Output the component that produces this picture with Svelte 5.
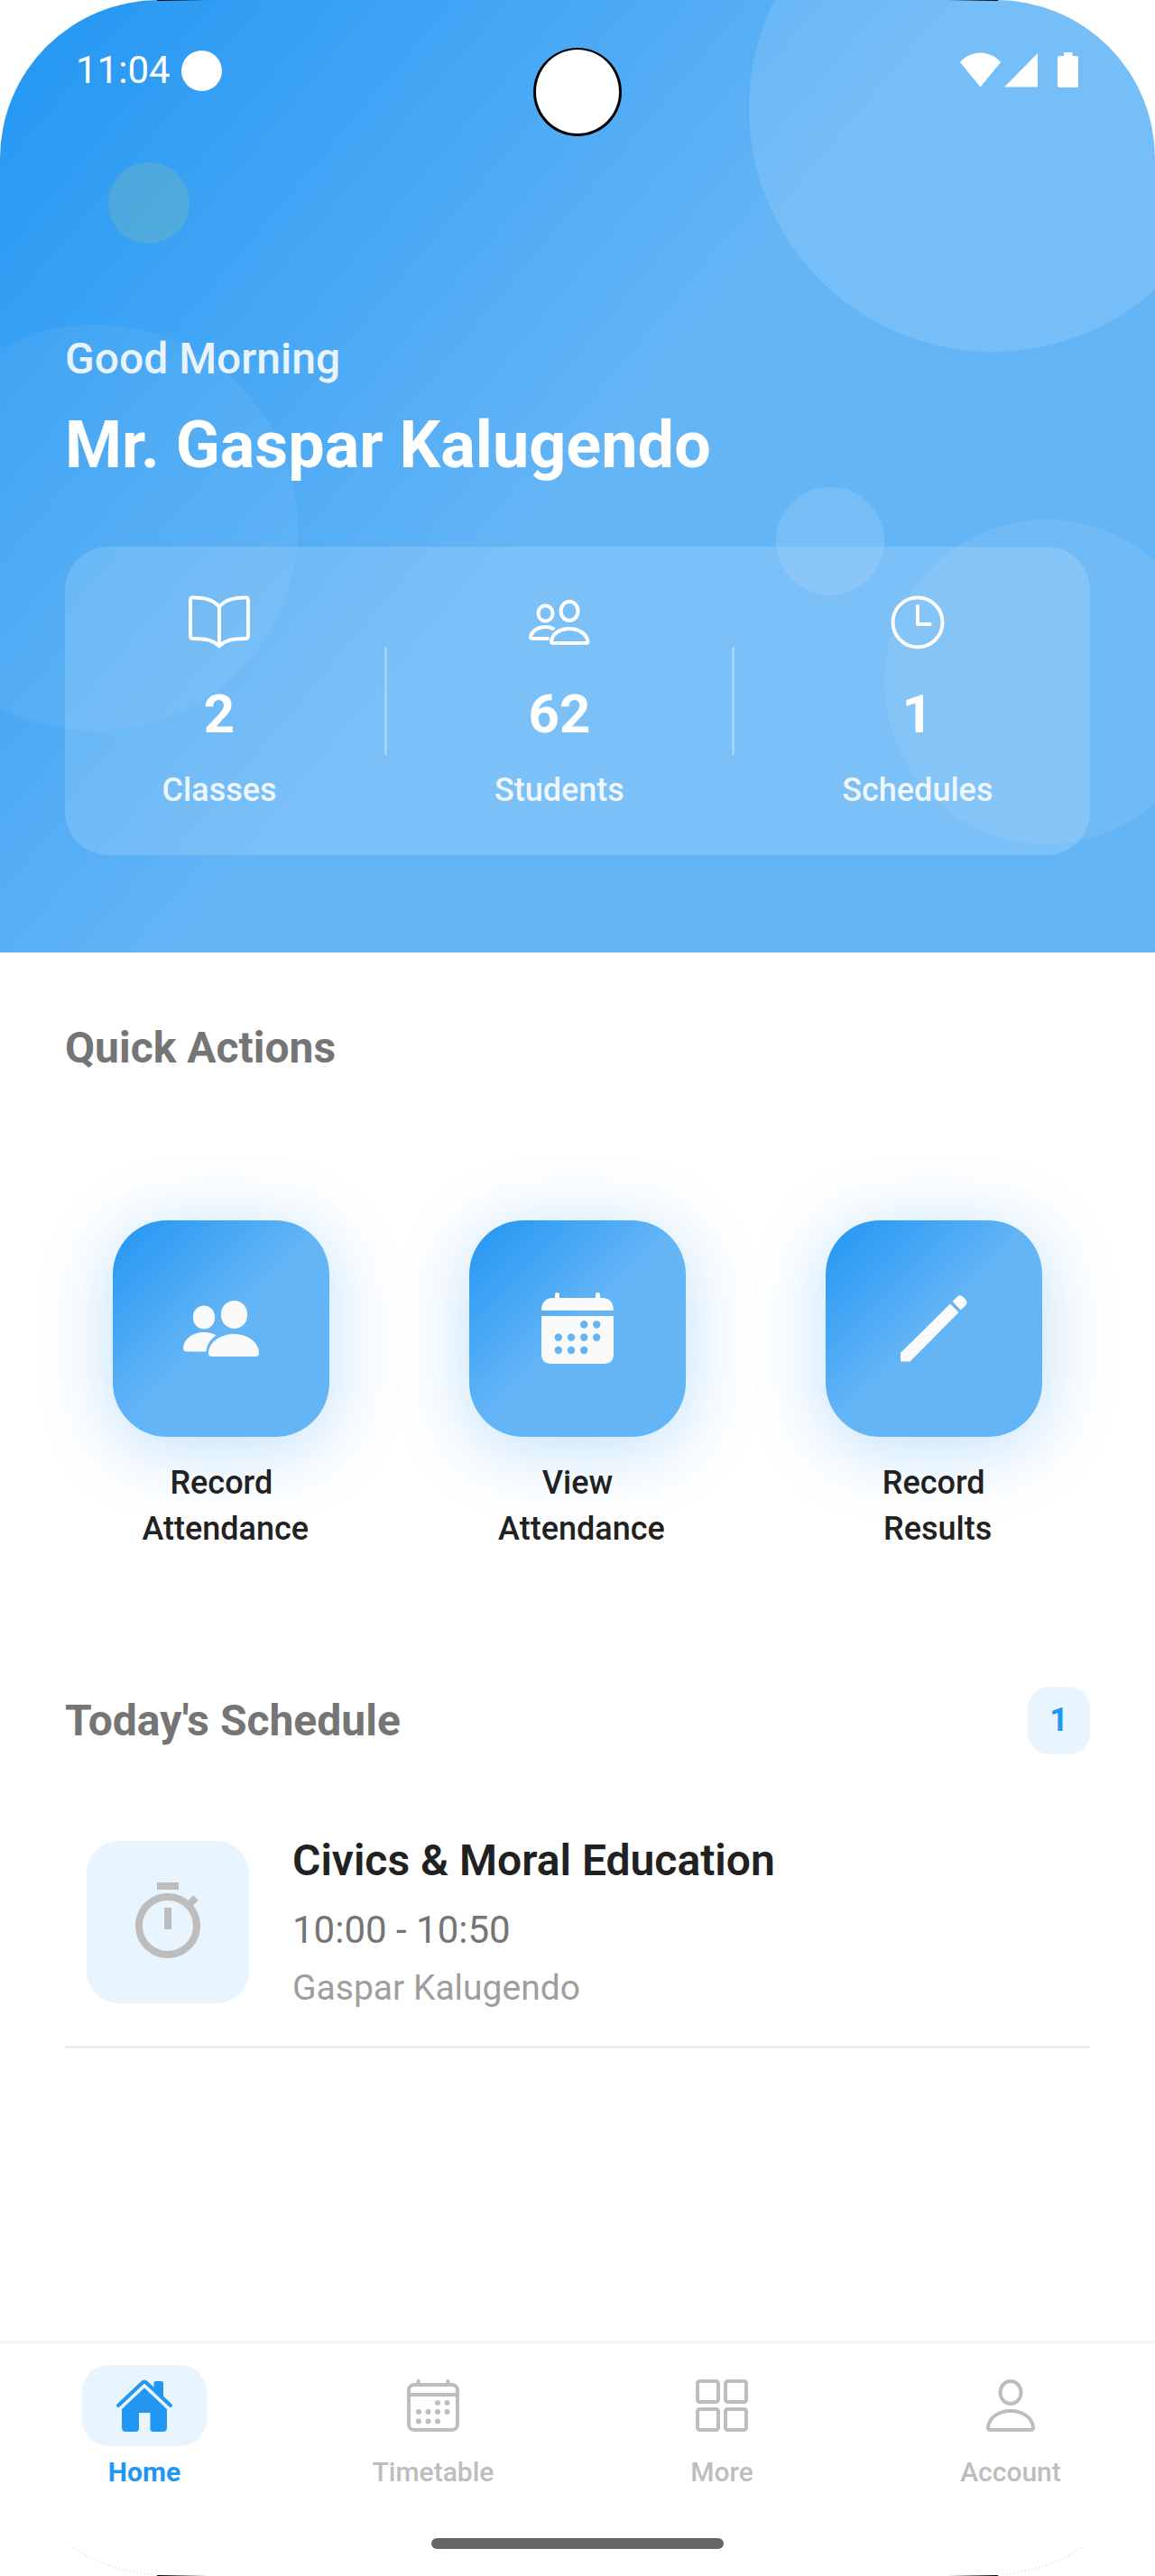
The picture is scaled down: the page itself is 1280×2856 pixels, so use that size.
<script lang="ts">
  type Stat = { icon: string; value: number; label: string };
  type Action = { icon: string; label: string };
  type Lesson = { subject: string; time: string; teacher: string };
  type Tab = { id: string; label: string };

  const stats: Stat[] = [
    { icon: 'book', value: 2, label: 'Classes' },
    { icon: 'people', value: 62, label: 'Students' },
    { icon: 'clock', value: 1, label: 'Schedules' },
  ];

  const actions: Action[] = [
    { icon: 'people', label: 'Record\n Attendance' },
    { icon: 'calendar', label: 'View\n Attendance' },
    { icon: 'pencil', label: 'Record\n Results' },
  ];

  const lessons: Lesson[] = [
    { subject: 'Civics & Moral Education', time: '10:00 - 10:50', teacher: 'Gaspar Kalugendo' },
  ];

  const tabs: Tab[] = [
    { id: 'home', label: 'Home' },
    { id: 'timetable', label: 'Timetable' },
    { id: 'more', label: 'More' },
    { id: 'account', label: 'Account' },
  ];

  let activeTab = $state<string>('home');
</script>

{#snippet statIcon(name: string)}
  <svg class="stat__icon" viewBox="0 0 72 72" aria-hidden="true">
    {#if name === 'book'}
      <path d="M36 19C31 12 20 8.5 7 8.5Q4 8.5 4 11.5V51Q4 54 7 54C22 54 30 56 36 62.5C42 56 50 54 65 54Q68 54 68 51V11.5Q68 8.5 65 8.5C52 8.5 41 12 36 19V62" />
    {:else if name === 'people'}
      <ellipse cx="20.5" cy="26" rx="8" ry="8.5" />
      <ellipse cx="47" cy="23.5" rx="9.5" ry="10.5" />
      <path d="M23 54H6Q3.500 54 4 51.500C6 45 13 41 20.500 41Q25.500 41 29 43" />
      <path d="M29 59Q27 59 27 57C28 49 36 43 47 43S66 49 67.500 57Q67.500 59 65.500 59Z" />
    {:else}
      <circle cx="36" cy="36" r="27.500" />
      <path d="M36 18V38H49.500" />
    {/if}
  </svg>
{/snippet}

{#snippet actionIcon(name: string)}
  <svg class="action__icon" viewBox="0 0 84 84" aria-hidden="true">
    {#if name === 'people'}
      <rect x="11" y="16.500" width="24" height="26" rx="12" />
      <rect x="42" y="11" width="29" height="31" rx="14.500" />
      <path d="M4 67.500Q0 67.500 0 63C1 53 11 46 23 46Q31 46 36.500 49.500C30 54 26 60 25.500 67.500Z" />
      <path d="M32 73Q28 73 28 69C28.500 57 41 48 56.200 48S83.500 57 84 69Q84 73 80.500 73Z" />
    {:else if name === 'calendar'}
      <path
        fill-rule="evenodd"
        d="M2 22C2 13 7 8 14 8H17V4.500a2.500 2.500 0 0 1 5 0V8H62V4.500a2.500 2.500 0 0 1 5 0V8H70C77 8 82 13 82 22ZM2 28H82V70Q82 81 71 81H13Q2 81 2 70Z
        M45 37.500a4.200 4.200 0 1 0 8.400 0a4.200 4.200 0 1 0-8.400 0ZM59 37.500a4.200 4.200 0 1 0 8.400 0a4.200 4.200 0 1 0-8.400 0Z
        M16.600 51.700a4.200 4.200 0 1 0 8.400 0a4.200 4.200 0 1 0-8.400 0ZM30.800 51.700a4.200 4.200 0 1 0 8.400 0a4.200 4.200 0 1 0-8.400 0Z
        M45 51.700a4.200 4.200 0 1 0 8.400 0a4.200 4.200 0 1 0-8.400 0ZM59 51.700a4.200 4.200 0 1 0 8.400 0a4.200 4.200 0 1 0-8.400 0Z
        M16.600 66a4.200 4.200 0 1 0 8.400 0a4.200 4.200 0 1 0-8.400 0ZM30.800 66a4.200 4.200 0 1 0 8.400 0a4.200 4.200 0 1 0-8.400 0Z
        M45 66a4.200 4.200 0 1 0 8.400 0a4.200 4.200 0 1 0-8.400 0Z"
      />
    {:else}
      <path d="M60 14.500L69.500 24L15.500 78.500H5V69Z" />
      <path d="M62.500 12L67 7.500Q70.800 3.500 74.500 7L76.500 9Q80.500 13 76.500 17L71.800 21.500Z" />
    {/if}
  </svg>
{/snippet}

{#snippet tabIcon(name: string)}
  <svg class="tab__icon" class:tab__icon--solid={name === 'home'} viewBox="0 0 66 66" aria-hidden="true">
    {#if name === 'home'}
      <path class="tab__roof" d="M4 33L31 7.500Q33 5.500 35 7.500L62 33" />
      <path d="M43.500 14V8Q43.500 6 45.500 6H52Q54 6 54 8V24.500Z" />
      <path d="M33 13.500L58 37V57.500Q58 62 53.500 62H43Q39.500 62 39.500 58.500V41H27V58.500Q27 62 23 62H12.500Q8 62 8 57.500V37Z" />
    {:else if name === 'timetable'}
      <rect x="6" y="10" width="54" height="50" rx="6" />
      <path d="M6 21H60M16.500 6V9M49.500 6V9" />
      <g class="tab__dots">
        <circle cx="38" cy="30" r="3" /><circle cx="48.500" cy="30" r="3" />
        <circle cx="17" cy="40" r="3" /><circle cx="27.500" cy="40" r="3" />
        <circle cx="38" cy="40" r="3" /><circle cx="48.500" cy="40" r="3" />
        <circle cx="17" cy="50.500" r="3" /><circle cx="27.500" cy="50.500" r="3" />
        <circle cx="38" cy="50.500" r="3" />
      </g>
    {:else if name === 'more'}
      <rect x="6" y="6" width="23" height="23" rx="2.500" />
      <rect x="37" y="6" width="23" height="23" rx="2.500" />
      <rect x="6" y="37" width="23" height="23" rx="2.500" />
      <rect x="37" y="37" width="23" height="23" rx="2.500" />
    {:else}
      <ellipse cx="33" cy="18.500" rx="11.500" ry="12.500" />
      <path d="M10 60Q8 60 8 57C9 47 19 39 33 39S57 47 58 57Q58 60 56 60Z" />
    {/if}
  </svg>
{/snippet}

<div class="screen">
  <header class="hero">
    <span class="bubble bubble--top"></span>
    <span class="bubble bubble--left"></span>
    <span class="bubble bubble--right"></span>
    <span class="bubble bubble--small"></span>
    <span class="bubble bubble--green"></span>

    <div class="status">
      <div class="status__group">
        <time class="status__time">11:04</time>
        <span class="status__dot"></span>
      </div>
      <svg class="status__icons" viewBox="0 0 132 40" aria-hidden="true">
        <path d="M0 11C12-3 33-3 45 11L22.500 38.500Z" />
        <path d="M86 1V38.500H49Z" />
        <path d="M115 0H124.500V4H129Q131 4 131 6V36.500Q131 39 128.500 39H110.500Q108 39 108 36.500V6Q108 4 110 4H115Z" />
      </svg>
    </div>
    <span class="camera"></span>

    <p class="hero__greeting">Good Morning</p>
    <h1 class="hero__name">Mr. Gaspar Kalugendo</h1>

    <div class="stats">
      {#each stats as stat, i}
        {#if i > 0}<span class="stats__divider"></span>{/if}
        <div class="stat">
          {@render statIcon(stat.icon)}
          <strong class="stat__value">{stat.value}</strong>
          <span class="stat__label">{stat.label}</span>
        </div>
      {/each}
    </div>
  </header>

  <main class="content">
    <section>
      <h2 class="heading">Quick Actions</h2>
      <div class="actions">
        {#each actions as action}
          <button type="button" class="action">
            <span class="action__tile">{@render actionIcon(action.icon)}</span>
            <span class="action__label">{action.label}</span>
          </button>
        {/each}
      </div>
    </section>

    <section>
      <div class="schedule__head">
        <h2 class="heading">Today's Schedule</h2>
        <span class="schedule__count">{lessons.length}</span>
      </div>
      <ul class="schedule">
        {#each lessons as lesson}
          <li class="lesson">
            <span class="lesson__badge">
              <svg class="lesson__icon" viewBox="0 0 24 24" aria-hidden="true">
                <path d="M15 1H9v2h6V1zm-4 13h2V8h-2v6zm8.030-6.610l1.420-1.420c-.430-.510-.900-.990-1.410-1.410l-1.420 1.420C16.070 4.740 14.120 4 12 4c-4.970 0-9 4.030-9 9s4.020 9 9 9 9-4.030 9-9c0-2.120-.740-4.070-1.970-5.610zM12 20c-3.870 0-7-3.130-7-7s3.130-7 7-7 7 3.130 7 7-3.130 7-7 7z" />
              </svg>
            </span>
            <div class="lesson__body">
              <h3 class="lesson__subject">{lesson.subject}</h3>
              <p class="lesson__time">{lesson.time}</p>
              <p class="lesson__teacher">{lesson.teacher}</p>
            </div>
          </li>
        {/each}
      </ul>
    </section>
  </main>

  <nav class="tabs">
    {#each tabs as tab}
      <button
        type="button"
        class="tab"
        class:tab--active={activeTab === tab.id}
        aria-current={activeTab === tab.id ? 'page' : undefined}
        onclick={() => (activeTab = tab.id)}
      >
        <span class="tab__pill">{@render tabIcon(tab.id)}</span>
        <span class="tab__label">{tab.label}</span>
      </button>
    {/each}
  </nav>
  <div class="gesture"><span class="gesture__bar"></span></div>

  <span class="edge edge--top"></span>
  <span class="edge edge--bottom"></span>
  <svg class="corner corner--left" viewBox="0 0 96 34" aria-hidden="true"><path d="M0 0Q38 28 92 32" /></svg>
  <svg class="corner corner--right" viewBox="0 0 96 34" aria-hidden="true"><path d="M96 0Q58 28 4 32" /></svg>
</div>

<style>
  :global(body) {
    margin: 0;
    background: #fff;
  }

  .screen {
    position: relative;
    display: flex;
    flex-direction: column;
    min-height: 100vh;
    overflow: hidden;
    font-family: Roboto, 'Liberation Sans', sans-serif;
    color: #212121;
    background: #fff;
  }

  h1,
  h2,
  h3,
  p,
  ul {
    margin: 0;
    padding: 0;
  }

  button {
    padding: 0;
    font: inherit;
    color: inherit;
    background: none;
    border: 0;
    cursor: pointer;
  }

  /* Hero */
  .hero {
    position: relative;
    padding: 0 72px 108px;
    color: #fff;
    background: linear-gradient(130deg, #2196f3 0%, #64b5f6 50%);
    border-radius: 176px 176px 0 0;
    overflow: hidden;
  }

  .bubble {
    position: absolute;
    border-radius: 50%;
    background: rgba(255, 255, 255, 0.08);
  }
  .bubble--top {
    top: -150px;
    right: -90px;
    width: 540px;
    height: 540px;
    background: rgba(255, 255, 255, 0.12);
  }
  .bubble--left {
    top: 360px;
    left: -120px;
    width: 450px;
    height: 450px;
    background: rgba(255, 255, 255, 0.06);
  }
  .bubble--right {
    top: 576px;
    right: -60px;
    width: 360px;
    height: 360px;
  }
  .bubble--small {
    top: 540px;
    right: 300px;
    width: 120px;
    height: 120px;
    background: rgba(255, 255, 255, 0.12);
  }
  .bubble--green {
    top: 180px;
    left: 120px;
    width: 90px;
    height: 90px;
    background: rgba(255, 235, 59, 0.12);
  }

  .status {
    position: relative;
    display: flex;
    align-items: center;
    justify-content: space-between;
    height: 156px;
    padding: 0 12px;
    margin-bottom: 208px;
  }
  .status__group {
    display: flex;
    align-items: center;
    gap: 12px;
  }
  .status__time {
    font-size: 42px;
    line-height: 48px;
  }
  .status__dot {
    width: 45px;
    height: 45px;
    border-radius: 50%;
    background: #fff;
  }
  .status__icons {
    width: 132px;
    height: 40px;
    fill: #fff;
  }

  .camera {
    position: absolute;
    top: 53px;
    left: 50%;
    box-sizing: border-box;
    width: 98px;
    height: 98px;
    margin-left: -49px;
    border: 3px solid #000;
    border-top-width: 2px;
    border-radius: 50%;
    background: #fff;
  }

  .hero__greeting {
    position: relative;
    font-size: 48px;
    line-height: 67px;
    font-weight: 500;
    color: rgba(255, 255, 255, 0.9);
  }
  .hero__name {
    position: relative;
    margin: 12px 0 62px;
    font-size: 72px;
    line-height: 101px;
    font-weight: 700;
  }

  .stats {
    position: relative;
    display: flex;
    align-items: center;
    justify-content: space-around;
    padding: 48px;
    border-radius: 48px;
    background: rgba(255, 255, 255, 0.15);
  }
  .stats__divider {
    width: 3px;
    height: 120px;
    background: rgba(255, 255, 255, 0.3);
  }
  .stat {
    display: flex;
    flex-direction: column;
    align-items: center;
  }
  .stat__icon {
    width: 72px;
    height: 72px;
    fill: none;
    stroke: #fff;
    stroke-width: 4;
    stroke-linecap: round;
    stroke-linejoin: round;
  }
  .stat__value {
    margin: 24px 0 18px;
    font-size: 60px;
    line-height: 84px;
    font-weight: 700;
  }
  .stat__label {
    font-size: 36px;
    line-height: 48px;
    font-weight: 500;
    color: rgba(255, 255, 255, 0.9);
  }

  /* Content */
  .content {
    flex: 1;
    display: flex;
    flex-direction: column;
    gap: 149px;
    padding: 72px;
  }
  .heading {
    font-size: 48px;
    line-height: 67px;
    font-weight: 700;
    color: #757575;
  }

  .actions {
    display: grid;
    grid-template-columns: repeat(3, 1fr);
    gap: 48px;
    margin-top: 158px;
  }
  .action {
    display: flex;
    flex-direction: column;
    align-items: center;
    gap: 26px;
  }
  .action__tile {
    display: flex;
    align-items: center;
    justify-content: center;
    width: 240px;
    height: 240px;
    border-radius: 60px;
    background: linear-gradient(135deg, #2196f3 0%, #64b5f6 50%);
    box-shadow: 0 12px 80px rgba(33, 150, 243, 0.3);
  }
  .action__icon {
    width: 84px;
    height: 84px;
    fill: #fafafa;
  }
  .action__label {
    position: relative;
    font-size: 36px;
    line-height: 51px;
    font-weight: 500;
    text-align: center;
    white-space: pre;
  }

  .schedule__head {
    display: flex;
    align-items: center;
    justify-content: space-between;
  }
  .schedule__count {
    padding: 12px 24px;
    font-size: 36px;
    line-height: 51px;
    font-weight: 700;
    color: #2196f3;
    background: #e8f4fe;
    border-radius: 24px;
  }
  .schedule {
    margin-top: 48px;
    list-style: none;
  }
  .lesson {
    display: flex;
    align-items: center;
    gap: 48px;
    padding: 36px 24px;
    border-bottom: 3px solid #eee;
  }
  .lesson__badge {
    display: flex;
    align-items: center;
    justify-content: center;
    width: 180px;
    height: 180px;
    border-radius: 36px;
    background: #e8f4fe;
  }
  .lesson__icon {
    width: 96px;
    height: 96px;
    fill: #bdbdbd;
  }
  .lesson__subject {
    font-size: 48px;
    line-height: 67px;
    font-weight: 600;
  }
  .lesson__time {
    margin: 14px 0 7px;
    font-size: 42px;
    line-height: 59px;
    color: #757575;
  }
  .lesson__teacher {
    font-size: 39px;
    line-height: 56px;
    color: #9e9e9e;
  }

  /* Bottom navigation */
  .tabs {
    display: grid;
    grid-template-columns: repeat(4, 1fr);
    padding-top: 24px;
    border-top: 3px solid #f5f5f5;
  }
  .tab {
    display: flex;
    flex-direction: column;
    align-items: center;
    gap: 8px;
    color: #bdbdbd;
  }
  .tab__pill {
    display: flex;
    padding: 12px 36px;
    border-radius: 30px;
  }
  .tab__icon {
    width: 66px;
    height: 66px;
    fill: none;
    stroke: currentColor;
    stroke-width: 4;
    stroke-linecap: round;
    stroke-linejoin: round;
  }
  .tab__icon--solid {
    fill: currentColor;
    stroke: none;
  }
  .tab__roof {
    fill: none;
    stroke: currentColor;
  }
  .tab__dots {
    fill: currentColor;
    stroke: none;
  }
  .tab__label {
    font-size: 30px;
    line-height: 42px;
    font-weight: 500;
  }
  .tab--active {
    color: #2196f3;
  }
  .tab--active .tab__pill {
    background: #e8f4fe;
  }
  .tab--active .tab__label {
    font-weight: 700;
  }

  .gesture {
    display: flex;
    justify-content: center;
    padding: 52px 0 30px;
  }
  .gesture__bar {
    width: 324px;
    height: 12px;
    border-radius: 6px;
    background: #666;
  }

  /* Traces of the rounded display frame */
  .edge {
    position: absolute;
    left: 174px;
    right: 174px;
    height: 1px;
    background: linear-gradient(90deg, #000, transparent 56px, transparent calc(100% - 56px), #000);
  }
  .edge--top {
    top: 0;
  }
  .edge--bottom {
    bottom: 0;
  }
  .corner {
    position: absolute;
    bottom: 0;
    width: 96px;
    height: 34px;
    fill: none;
    stroke: #bbb;
    stroke-width: 1;
    stroke-dasharray: 1 3;
  }
  .corner--left {
    left: 78px;
  }
  .corner--right {
    right: 78px;
  }
</style>
